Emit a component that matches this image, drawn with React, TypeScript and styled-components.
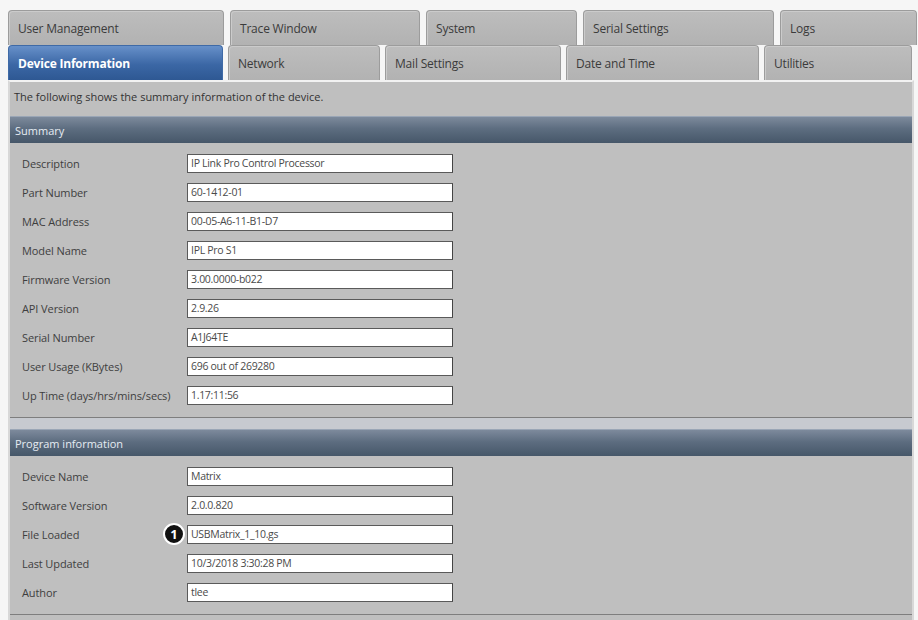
import * as React from "react"
import styled, { createGlobalStyle } from "styled-components"

const GlobalStyle = createGlobalStyle`
  html, body {
    margin: 0;
    padding: 0;
    background: #f6f6f6;
  }
  body {
    font-family: "Open Sans", "Noto Sans", sans-serif;
  }
`

const Page = styled.div`
  width: 918px;
  height: 620px;
  padding: 10px 4px 0 8px;
  box-sizing: border-box;
  overflow: hidden;
`

const TabRow = styled.div<{ $gap: number }>`
  display: flex;
  gap: ${(p) => p.$gap}px;
  height: 35px;
`

const Tab = styled.div<{ $w: number; $active?: boolean }>`
  width: ${(p) => p.$w}px;
  flex: none;
  box-sizing: border-box;
  display: flex;
  align-items: center;
  padding-left: 9px;
  font-size: 12px;
  border: 1px solid ${(p) => (p.$active ? "#3f6aa6" : "#9c9c9c")};
  border-bottom: none;
  border-radius: 4px 4px 0 0;
  color: ${(p) => (p.$active ? "#ffffff" : "#3b3b3b")};
  font-weight: ${(p) => (p.$active ? 700 : 400)};
  background: ${(p) =>
    p.$active
      ? "linear-gradient(#6790c9, #3b67a5 55%, #2e5893)"
      : "linear-gradient(#bdbdbd, #b2b2b2)"};
  box-shadow: ${(p) => (p.$active ? "none" : "inset 1px 1px 0 #cbcbcb")};
  letter-spacing: -0.2px;
`

const Panel = styled.div`
  border-top: 2px solid #f2f2f2;
  border-left: 2px solid #d8d8d8;
  border-right: 2px solid #d8d8d8;
  background: #bfbfbf;
  height: 560px;
`

const Intro = styled.div`
  padding: 7px 0 0 4px;
  height: 34px;
  box-sizing: border-box;
  font-size: 11px;
  color: #333;
`

const Section = styled.div<{ $spaced?: boolean }>`
  border-top: ${(p) => (p.$spaced ? "11px solid #c7cad0" : "none")};
`

const SectionHeader = styled.div`
  height: 26px;
  display: flex;
  align-items: center;
  padding-left: 5px;
  font-size: 11px;
  color: #e6ecf3;
  background: linear-gradient(#7d8a9c, #5d6d80 45%, #465769);
  border-top: 1px solid #9aa6b6;
`

const SectionBody = styled.div`
  padding: 6px 0 7px 12px;
  border-bottom: 1px solid #7e7e7e;
`

const Row = styled.div`
  display: grid;
  grid-template-columns: 165px 266px;
  align-items: center;
  height: 29px;
`

const Label = styled.span`
  font-size: 11px;
  color: #3e3e3e;
  letter-spacing: -0.1px;
`

const FieldWrap = styled.div`
  position: relative;
`

const Field = styled.div`
  height: 19px;
  box-sizing: border-box;
  border: 1px solid #5a5a5a;
  border-right-color: #444;
  background: #ffffff;
  font-size: 10.5px;
  color: #4a4a4a;
  padding-left: 3px;
  line-height: 17px;
  letter-spacing: -0.3px;
  white-space: nowrap;
  overflow: hidden;
`

const Badge = styled.span`
  position: absolute;
  left: -24px;
  top: -2px;
  width: 18px;
  height: 18px;
  border-radius: 50%;
  background: #111;
  border: 2px solid #fff;
  color: #fff;
  font-size: 13px;
  font-weight: 700;
  display: flex;
  align-items: center;
  justify-content: center;
  line-height: 1;
`

const row1 = [
  { name: "User Management", w: 216 },
  { name: "Trace Window", w: 190 },
  { name: "System", w: 151 },
  { name: "Serial Settings", w: 191 },
  { name: "Logs", w: 137 },
]

const row2 = [
  { name: "Device Information", w: 215, active: true },
  { name: "Network", w: 152 },
  { name: "Mail Settings", w: 176 },
  { name: "Date and Time", w: 193 },
  { name: "Utilities", w: 148 },
]

const summary = [
  ["Description", "IP Link Pro Control Processor"],
  ["Part Number", "60-1412-01"],
  ["MAC Address", "00-05-A6-11-B1-D7"],
  ["Model Name", "IPL Pro S1"],
  ["Firmware Version", "3.00.0000-b022"],
  ["API Version", "2.9.26"],
  ["Serial Number", "A1J64TE"],
  ["User Usage (KBytes)", "696 out of 269280"],
  ["Up Time (days/hrs/mins/secs)", "1.17:11:56"],
]

const program = [
  ["Device Name", "Matrix"],
  ["Software Version", "2.0.0.820"],
  ["File Loaded", "USBMatrix_1_10.gs"],
  ["Last Updated", "10/3/2018 3:30:28 PM"],
  ["Author", "tlee"],
]

const App = () => {
  return (
    <Page>
      <GlobalStyle />
      <TabRow $gap={6}>
        {row1.map((t) => (
          <Tab key={t.name} $w={t.w}>
            {t.name}
          </Tab>
        ))}
      </TabRow>
      <TabRow $gap={5}>
        {row2.map((t) => (
          <Tab key={t.name} $w={t.w} $active={t.active}>
            {t.name}
          </Tab>
        ))}
      </TabRow>
      <Panel>
        <Intro>The following shows the summary information of the device.</Intro>
        <Section>
          <SectionHeader>Summary</SectionHeader>
          <SectionBody>
            {summary.map(([label, value]) => (
              <Row key={label}>
                <Label>{label}</Label>
                <FieldWrap>
                  <Field>{value}</Field>
                </FieldWrap>
              </Row>
            ))}
          </SectionBody>
        </Section>
        <Section $spaced>
          <SectionHeader>Program information</SectionHeader>
          <SectionBody>
            {program.map(([label, value]) => (
              <Row key={label}>
                <Label>{label}</Label>
                <FieldWrap>
                  {label === "File Loaded" && <Badge>1</Badge>}
                  <Field>{value}</Field>
                </FieldWrap>
              </Row>
            ))}
          </SectionBody>
        </Section>
      </Panel>
    </Page>
  )
}

export default App
